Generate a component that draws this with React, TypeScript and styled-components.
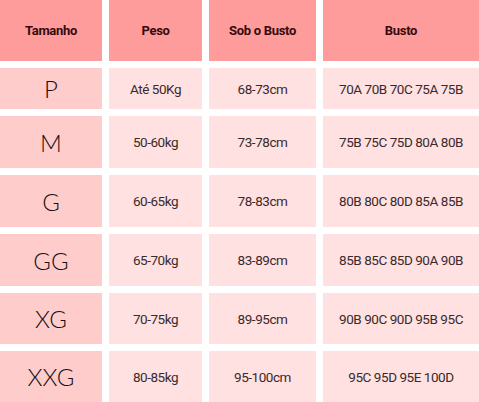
import React from 'react';
import styled, { createGlobalStyle } from 'styled-components';

const GlobalStyle = createGlobalStyle`
  html, body {
    margin: 0;
    padding: 0;
    background: #ffffff;
  }
`;

const rows = [
  { size: 'P', peso: 'Até 50Kg', sob: '68-73cm', busto: '70A 70B 70C 75A 75B' },
  { size: 'M', peso: '50-60kg', sob: '73-78cm', busto: '75B 75C 75D 80A 80B' },
  { size: 'G', peso: '60-65kg', sob: '78-83cm', busto: '80B 80C 80D 85A 85B' },
  { size: 'GG', peso: '65-70kg', sob: '83-89cm', busto: '85B 85C 85D 90A 90B' },
  { size: 'XG', peso: '70-75kg', sob: '89-95cm', busto: '90B 90C 90D 95B 95C' },
  { size: 'XXG', peso: '80-85kg', sob: '95-100cm', busto: '95C 95D 95E 100D' },
];

const Table = styled.div`
  display: grid;
  grid-template-columns: 102px 93px 107px 156px;
  grid-template-rows: 61px 41px 52px 52px 52px 51px 51px;
  gap: 7px;
  width: 479px;
  height: 402px;
  background: #ffffff;
`;

const Cell = styled.div<{ $kind: 'head' | 'size' | 'body' }>`
  display: flex;
  align-items: center;
  justify-content: center;
  background: ${(p) => (p.$kind === 'head' ? '#fe9b9b' : p.$kind === 'size' ? '#ffcccc' : '#ffe1e1')};
  color: ${(p) => (p.$kind === 'head' ? '#350a0c' : p.$kind === 'size' ? '#151012' : '#3a2a2c')};
  font-family: ${(p) => (p.$kind === 'size' ? "'Lato', 'Inter', sans-serif" : "'Roboto', 'Liberation Sans', sans-serif")};
  font-size: ${(p) => (p.$kind === 'head' ? '13px' : p.$kind === 'size' ? '24px' : '13.5px')};
  font-weight: ${(p) => (p.$kind === 'head' ? 700 : p.$kind === 'size' ? 300 : 400)};
  letter-spacing: ${(p) => (p.$kind === 'head' ? '-0.3px' : p.$kind === 'body' ? '-0.45px' : '0')};
  white-space: nowrap;
`;

const App = () => {
  return (
    <>
      <GlobalStyle />
      <Table>
        <Cell $kind="head">Tamanho</Cell>
        <Cell $kind="head">Peso</Cell>
        <Cell $kind="head">Sob o Busto</Cell>
        <Cell $kind="head">Busto</Cell>
        {rows.map((r) => (
          <React.Fragment key={r.size}>
            <Cell $kind="size">{r.size}</Cell>
            <Cell $kind="body">{r.peso}</Cell>
            <Cell $kind="body">{r.sob}</Cell>
            <Cell $kind="body">{r.busto}</Cell>
          </React.Fragment>
        ))}
      </Table>
    </>
  );
};

export default App;
